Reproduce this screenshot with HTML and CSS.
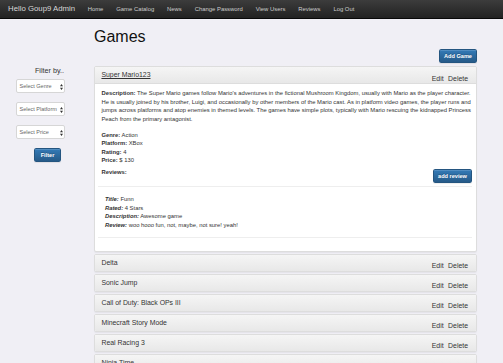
FILE: index.html
```html
<!DOCTYPE html>
<html lang="en">
<head>
<meta charset="utf-8">
<title>Games - Admin</title>
<link rel="stylesheet" href="styles.css">
</head>
<body>
<nav class="navbar">
  <a class="brand" href="#">Hello Goup9 Admin</a>
  <ul class="nav">
    <li><a href="#">Home</a></li>
    <li><a href="#">Game Catalog</a></li>
    <li><a href="#">News</a></li>
    <li><a href="#">Change Password</a></li>
    <li><a href="#">View Users</a></li>
    <li><a href="#">Reviews</a></li>
    <li><a href="#">Log Out</a></li>
  </ul>
</nav>
<div class="layout">
  <aside class="sidebar">
    <div class="filter-title">Filter by..</div>
    <div class="select"><span>Select Genre</span><svg class="arrows" width="3" height="6" viewBox="0 0 3 6"><path d="M1.5 0 L3 2.2 H0 Z M1.5 6 L3 3.8 H0 Z" fill="#333"/></svg></div>
    <div class="select"><span>Select Platform</span><svg class="arrows" width="3" height="6" viewBox="0 0 3 6"><path d="M1.5 0 L3 2.2 H0 Z M1.5 6 L3 3.8 H0 Z" fill="#333"/></svg></div>
    <div class="select"><span>Select Price</span><svg class="arrows" width="3" height="6" viewBox="0 0 3 6"><path d="M1.5 0 L3 2.2 H0 Z M1.5 6 L3 3.8 H0 Z" fill="#333"/></svg></div>
    <button class="btn filter-btn">Filter</button>
  </aside>
  <main class="main">
    <h1>Games</h1>
    <div class="toolbar"><button class="btn add-game">Add Game</button></div>
    <div class="panels">
      <div class="panel">
        <div class="panel-heading open">
          <a class="panel-title link" href="#">Super Mario123</a>
          <div class="actions"><a href="#">Edit</a><a href="#">Delete</a></div>
        </div>
        <div class="panel-body">
          <p class="desc"><b>Description:</b> The Super Mario games follow Mario's adventures in the fictional Mushroom Kingdom, usually with Mario as the player character. He is usually joined by his brother, Luigi, and occasionally by other members of the Mario cast. As in platform video games, the player runs and jumps across platforms and atop enemies in themed levels. The games have simple plots, typically with Mario rescuing the kidnapped Princess Peach from the primary antagonist.</p>
          <div class="facts">
            <div><b>Genre:</b> Action</div>
            <div><b>Platform:</b> XBox</div>
            <div><b>Rating:</b> 4</div>
            <div><b>Price:</b> $ 130</div>
          </div>
          <div class="reviews-row">
            <b>Reviews:</b>
            <button class="btn add-review">add review</button>
          </div>
          <div class="review">
            <div><b><i>Title:</i></b> Funn</div>
            <div><b><i>Rated:</i></b> 4 Stars</div>
            <div><b><i>Description:</i></b> Awesome game</div>
            <div><b><i>Review:</i></b> woo hooo fun, not, maybe, not sure! yeah!</div>
          </div>
        </div>
      </div>
      <div class="panel"><div class="panel-heading"><span class="panel-title">Delta</span><div class="actions"><a href="#">Edit</a><a href="#">Delete</a></div></div></div>
      <div class="panel"><div class="panel-heading"><span class="panel-title">Sonic Jump</span><div class="actions"><a href="#">Edit</a><a href="#">Delete</a></div></div></div>
      <div class="panel"><div class="panel-heading"><span class="panel-title">Call of Duty: Black OPs III</span><div class="actions"><a href="#">Edit</a><a href="#">Delete</a></div></div></div>
      <div class="panel"><div class="panel-heading"><span class="panel-title">Minecraft Story Mode</span><div class="actions"><a href="#">Edit</a><a href="#">Delete</a></div></div></div>
      <div class="panel"><div class="panel-heading"><span class="panel-title">Real Racing 3</span><div class="actions"><a href="#">Edit</a><a href="#">Delete</a></div></div></div>
      <div class="panel"><div class="panel-heading"><span class="panel-title">Ninja Time</span><div class="actions"><a href="#">Edit</a><a href="#">Delete</a></div></div></div>
    </div>
  </main>
</div>
</body>
</html>
```
FILE: styles.css
```css
html {
  overflow: hidden;
}
body {
  margin: 0;
  background: #f0eff5;
  font-family: "Liberation Sans", Arial, sans-serif;
  color: #333;
  font-size: 5.85px;
  line-height: 8.6px;
}
a {
  color: #333;
  text-decoration: none;
}

/* navbar */
.navbar {
  height: 19px;
  box-sizing: border-box;
  background: linear-gradient(#3c3c3c, #222);
  border-bottom: 1px solid #080808;
  display: flex;
  align-items: center;
}
.brand {
  font-size: 7.8px;
  color: #d8d8d8;
  padding: 0 6px 0 8px;
}
.nav {
  list-style: none;
  margin: 0;
  padding: 0;
  display: flex;
}
.nav a {
  display: block;
  padding: 0 6.45px;
  font-size: 5.9px;
  color: #cdcdcd;
}

/* layout */
.layout {
  display: grid;
  grid-template-columns: 94px 383px;
}

/* sidebar */
.sidebar {
  padding: 47px 0 0 16px;
  display: flex;
  flex-direction: column;
  align-items: flex-start;
}
.filter-title {
  width: 48px;
  text-align: right;
  font-size: 7.2px;
  line-height: 10px;
  color: #333;
  margin-bottom: 3px;
}
.select {
  position: relative;
  width: 49px;
  height: 14px;
  box-sizing: border-box;
  border: 1px solid #d6d6d6;
  border-radius: 2px;
  background: #fff;
  font-size: 5.5px;
  color: #666;
  padding-left: 2.5px;
  display: flex;
  align-items: center;
  margin-bottom: 9px;
  white-space: nowrap;
}
.arrows {
  position: absolute;
  right: 1.5px;
  top: 3.5px;
}

/* buttons */
.btn {
  font-family: inherit;
  font-size: 5.6px;
  font-weight: bold;
  line-height: 12px;
  height: 14px;
  padding: 0;
  color: #fff;
  background: linear-gradient(#337ab7, #265a88);
  border: 1px solid #245580;
  border-radius: 1.7px;
  text-shadow: 0 -1px 0 rgba(0, 0, 0, 0.2);
  box-shadow: inset 0 1px 0 rgba(255, 255, 255, 0.15), 0 1px 1px rgba(0, 0, 0, 0.075);
}
.filter-btn {
  width: 27px;
  margin-left: 18px;
}
.add-game {
  width: 38px;
}
.add-review {
  width: 39px;
  margin-top: 1.3px;
}

/* main */
.main {
  min-width: 0;
}
h1 {
  font-size: 16px;
  line-height: 18px;
  font-weight: normal;
  color: #111;
  margin: 8.5px 0 0;
}
.toolbar {
  display: flex;
  justify-content: flex-end;
  margin-top: 3.5px;
}
.panels {
  margin-top: 3px;
}
.panel {
  background: #fff;
  border: 1px solid #ddd;
  border-radius: 2px;
  box-shadow: 0 1px 1px rgba(0, 0, 0, 0.05);
}
.panel + .panel {
  margin-top: 2px;
}
.panel-heading {
  display: flex;
  justify-content: space-between;
  align-items: flex-start;
  padding: 4px 8px 4px 6.45px;
  background: linear-gradient(#f5f5f5, #e8e8e8);
  border-radius: 1px;
}
.panel-heading.open {
  border-bottom: 1px solid #ddd;
  border-radius: 1px 1px 0 0;
}
.panel-title {
  font-size: 6.9px;
  line-height: 8px;
  color: #333;
}
.panel-title.link {
  text-decoration: underline;
}
.actions {
  display: flex;
  gap: 4.5px;
  font-size: 6.9px;
  line-height: 8px;
  margin: 3.5px 0 -3.5px;
}
.panel-body {
  padding: 5px 2px 5px 6.45px;
}
.desc {
  margin: 0;
}
.facts {
  margin-top: 7.2px;
}
.reviews-row {
  margin-top: 3.1px;
  margin-right: 2px;
  display: flex;
  justify-content: space-between;
  align-items: flex-start;
}
.review {
  margin: 3px 2px 7.5px -3.5px;
  border-top: 1px solid #eeeeee;
  border-bottom: 1px solid #eeeeee;
  padding: 7.7px 7px 7.9px;
}
```
